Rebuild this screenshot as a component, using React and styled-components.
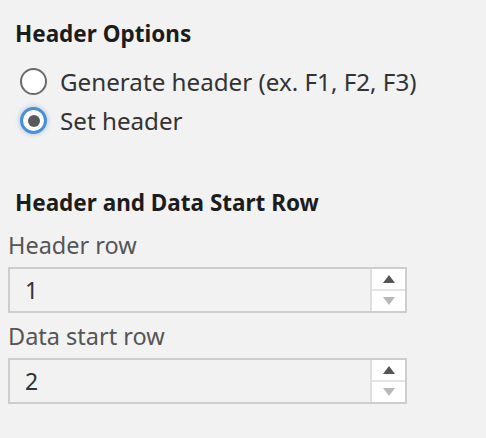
import React, { useState } from 'react';
import styled, { createGlobalStyle } from 'styled-components';

const GlobalStyle = createGlobalStyle`
  html, body {
    margin: 0;
    padding: 0;
    background: #f2f2f2;
  }
  body {
    font-family: "Noto Sans", "Open Sans", sans-serif;
  }
`;

const HEADER_MODES = [
  { id: 'generate', label: 'Generate header (ex. F1, F2, F3)' },
  { id: 'set', label: 'Set header' },
];

const App = () => {
  const [mode, setMode] = useState('set');
  const [headerRow, setHeaderRow] = useState(1);
  const [dataRow, setDataRow] = useState(2);

  return (
    <Panel>
      <GlobalStyle />
      <SectionTitle>Header Options</SectionTitle>
      <RadioGroup>
        {HEADER_MODES.map((m) => (
          <RadioRow key={m.id} onClick={() => setMode(m.id)}>
            <RadioCircle $checked={mode === m.id} />
            <RadioLabel>{m.label}</RadioLabel>
          </RadioRow>
        ))}
      </RadioGroup>

      <SectionTitle $gap={49}>Header and Data Start Row</SectionTitle>
      <FieldLabel $gap={14}>Header row</FieldLabel>
      <NumberField value={headerRow} onChange={setHeaderRow} />
      <FieldLabel $gap={9}>Data start row</FieldLabel>
      <NumberField value={dataRow} onChange={setDataRow} />
    </Panel>
  );
};

const NumberField = ({ value, onChange }) => (
  <FieldBox>
    <FieldValue>{value}</FieldValue>
    <Spinner>
      <SpinButton onClick={() => onChange(value + 1)}>
        <svg width="12" height="8" viewBox="0 0 12 8">
          <polygon points="6,0 12,8 0,8" fill="#555" />
        </svg>
      </SpinButton>
      <SpinButton $bottom onClick={() => onChange(Math.max(1, value - 1))}>
        <svg width="12" height="8" viewBox="0 0 12 8">
          <polygon points="0,0 12,0 6,8" fill="#b8b8b8" />
        </svg>
      </SpinButton>
    </Spinner>
  </FieldBox>
);

const Panel = styled.div`
  display: flex;
  flex-direction: column;
  align-items: flex-start;
  padding: 20px 8px 0;
`;

const SectionTitle = styled.div`
  margin: ${(p) => p.$gap || 0}px 0 0 7px;
  font-size: 22.5px;
  line-height: 28px;
  font-weight: 700;
  color: #1c1c1c;
`;

const RadioGroup = styled.div`
  display: flex;
  flex-direction: column;
  margin-top: 14px;
  padding-left: 12px;
`;

const RadioRow = styled.label`
  display: flex;
  align-items: center;
  gap: 13px;
  height: 39px;
  cursor: pointer;
`;

const RadioCircle = styled.span`
  box-sizing: border-box;
  width: 27px;
  height: 27px;
  border-radius: 50%;
  background: #fff;
  border: ${(p) => (p.$checked ? '3px solid #4a8fd6' : '2px solid #6a6a6a')};
  box-shadow: ${(p) => (p.$checked ? '0 0 4px 1px rgba(74, 143, 214, 0.35)' : 'none')};
  display: flex;
  align-items: center;
  justify-content: center;
  &::after {
    content: '';
    width: 12px;
    height: 12px;
    border-radius: 50%;
    background: #5a5a5a;
    display: ${(p) => (p.$checked ? 'block' : 'none')};
  }
`;

const RadioLabel = styled.span`
  font-size: 24.2px;
  line-height: 28px;
  color: #333;
`;

const FieldLabel = styled.div`
  margin-top: ${(p) => p.$gap}px;
  font-size: 23.5px;
  line-height: 28px;
  color: #555;
`;

const FieldBox = styled.div`
  box-sizing: border-box;
  margin-top: 8px;
  width: 399px;
  height: 46px;
  display: flex;
  border: 2px solid #cdcdcd;
  background: #f2f2f2;
`;

const FieldValue = styled.div`
  flex: 1;
  display: flex;
  align-items: center;
  padding-left: 15px;
  font-size: 23px;
  color: #333;
`;

const Spinner = styled.div`
  width: 33px;
  display: flex;
  flex-direction: column;
  border-left: 2px solid #dedede;
`;

const SpinButton = styled.div`
  flex: 1;
  display: flex;
  align-items: center;
  justify-content: center;
  background: #fff;
  border-top: ${(p) => (p.$bottom ? '2px solid #e4e4e4' : 'none')};
  cursor: pointer;
`;

export default App;
